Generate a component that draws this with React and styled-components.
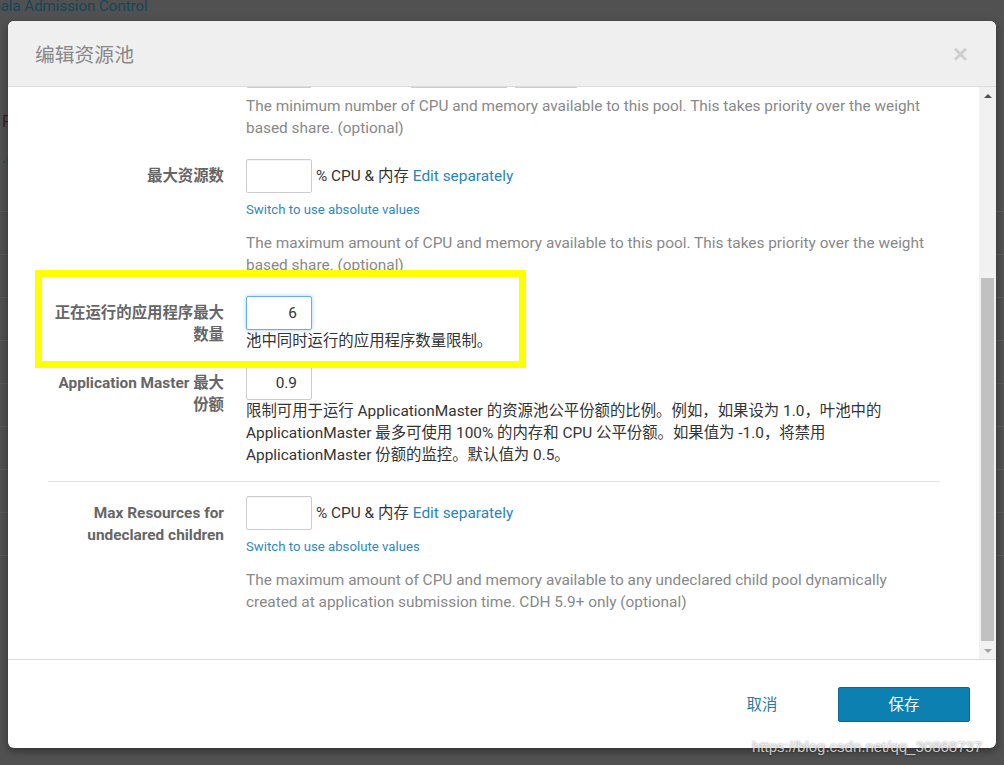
import React from 'react'
import styled, { createGlobalStyle } from 'styled-components'

const GlobalStyle = createGlobalStyle`
  html, body {
    margin: 0;
    padding: 0;
    background: #515151;
  }
  body {
    font-family: Roboto, "Noto Sans CJK SC", sans-serif;
    font-size: 15.4px;
  }
  * {
    box-sizing: border-box;
  }
`

export default () => {
  return (
    <Page>
      <GlobalStyle />
      <Backdrop>
        <PageTitle>Impala Admission Control</PageTitle>
        <PageLine $top={94} $color="#3e2020">F</PageLine>
        <PageLine $top={14} $color="#1d4c5c">.(</PageLine>
        {Array.from({ length: 9 }).map((_, i) => (
          <PageRow key={i} />
        ))}
      </Backdrop>

      <Modal>
        <Header>
          <Title>编辑资源池</Title>
          <Close>×</Close>
        </Header>

        <Body>
          <Content>
            <FormRow $top={-33}>
              <Label>最小资源数</Label>
              <Control>
                <InputLine>
                  <NumberInput readOnly value="" />
                  <Unit>虚拟内核</Unit>
                  <NumberInput readOnly value="" $width={98} $gap={32} />
                  <SelectBox>MiB</SelectBox>
                </InputLine>
                <Help $top={7}>
                  The minimum number of CPU and memory available to this pool. This takes priority over the weight
                  <br />
                  based share. (optional)
                </Help>
              </Control>
            </FormRow>

            <FormRow $top={20}>
              <Label>最大资源数</Label>
              <Control>
                <InputLine>
                  <NumberInput readOnly value="" />
                  <Unit>% CPU &amp; 内存</Unit>
                  <Link>Edit separately</Link>
                </InputLine>
                <SmallLink>Switch to use absolute values</SmallLink>
                <Help $top={13}>
                  The maximum amount of CPU and memory available to this pool. This takes priority over the weight
                  <br />
                  based share. (optional)
                </Help>
              </Control>
            </FormRow>

            <FormRow $top={20}>
              <Highlight />
              <Label>
                正在运行的应用程序最大
                <br />
                数量
              </Label>
              <Control>
                <InputLine>
                  <NumberInput readOnly value="6" $focused />
                </InputLine>
                <Note>池中同时运行的应用程序数量限制。</Note>
              </Control>
            </FormRow>

            <FormRow $top={14}>
              <Label>
                Application Master 最大
                <br />
                份额
              </Label>
              <Control>
                <InputLine>
                  <NumberInput readOnly value="0.9" />
                </InputLine>
                <Note>
                  限制可用于运行 ApplicationMaster 的资源池公平份额的比例。例如，如果设为 1.0，叶池中的
                  <br />
                  ApplicationMaster 最多可使用 100% 的内存和 CPU 公平份额。如果值为 -1.0，将禁用
                  <br />
                  ApplicationMaster 份额的监控。默认值为 0.5。
                </Note>
              </Control>
            </FormRow>

            <Divider />

            <FormRow $top={14}>
              <Label>
                Max Resources for
                <br />
                undeclared children
              </Label>
              <Control>
                <InputLine>
                  <NumberInput readOnly value="" />
                  <Unit>% CPU &amp; 内存</Unit>
                  <Link>Edit separately</Link>
                </InputLine>
                <SmallLink>Switch to use absolute values</SmallLink>
                <Help $top={13}>
                  The maximum amount of CPU and memory available to any undeclared child pool dynamically
                  <br />
                  created at application submission time. CDH 5.9+ only (optional)
                </Help>
              </Control>
            </FormRow>
          </Content>

          <Scrollbar>
            <Arrow>
              <ArrowUp />
            </Arrow>
            <ThumbTrack>
              <Thumb />
            </ThumbTrack>
            <Arrow>
              <ArrowDown />
            </Arrow>
          </Scrollbar>
        </Body>

        <Footer>
          <CancelButton>取消</CancelButton>
          <SaveButton>保存</SaveButton>
        </Footer>
      </Modal>

      <Watermark>https://blog.csdn.net/qq_30868737</Watermark>
    </Page>
  )
}

const Page = styled.div`
  position: relative;
  width: 1004px;
  height: 765px;
  overflow: hidden;
  background: #515151;
`

const Backdrop = styled.div`
  display: flex;
  flex-direction: column;
`

const PageTitle = styled.div`
  margin: -5px 0 0 -25px;
  font-size: 15px;
  line-height: 22px;
  color: #17455a;
`

const PageLine = styled.div`
  margin-top: ${p => p.$top}px;
  padding-left: 2px;
  font-size: 16px;
  line-height: 22px;
  color: ${p => p.$color};
`

const PageRow = styled.div`
  height: 43px;
  border-bottom: 1px solid #5b5b5b;
  &:first-of-type {
    margin-top: 20px;
  }
`

const Modal = styled.div`
  position: absolute;
  top: 21px;
  left: 8px;
  width: 988px;
  height: 727px;
  display: flex;
  flex-direction: column;
  background: #fff;
  border-radius: 6px;
  overflow: hidden;
  box-shadow: 0 3px 9px rgba(0, 0, 0, 0.4);
`

const Header = styled.div`
  display: flex;
  align-items: center;
  justify-content: space-between;
  height: 66px;
  flex-shrink: 0;
  padding: 0 28px 0 27px;
  background: #f0eff0;
  border-bottom: 1px solid #dcdcdc;
`

const Title = styled.h4`
  margin: 0;
  font-family: "Noto Sans CJK SC", Roboto, sans-serif;
  font-weight: 400;
  font-size: 19.8px;
  color: #888;
`

const Close = styled.span`
  font-family: "Liberation Sans", Arial, sans-serif;
  font-size: 26px;
  font-weight: 700;
  line-height: 1;
  color: #cfcfcf;
`

const Body = styled.div`
  flex: 1;
  display: flex;
  min-height: 0;
`

const Content = styled.div`
  flex: 1;
  overflow: hidden;
  padding: 0 39px 0 40px;
`

const FormRow = styled.div`
  position: relative;
  display: grid;
  grid-template-columns: 176px 1fr;
  column-gap: 22px;
  margin-top: ${p => p.$top}px;
`

const Label = styled.div`
  padding-top: 6px;
  text-align: right;
  font-weight: 700;
  font-size: 15.4px;
  line-height: 22px;
  color: #666;
  white-space: nowrap;
`

const Control = styled.div`
  display: flex;
  flex-direction: column;
  align-items: flex-start;
`

const InputLine = styled.div`
  display: flex;
  align-items: center;
  height: 34px;
`

const NumberInput = styled.input`
  width: ${p => p.$width || 66}px;
  height: 34px;
  margin-left: ${p => p.$gap || 0}px;
  padding: 0 14px 0 6px;
  border: 1px solid ${p => (p.$focused ? '#66afe9' : '#ccc')};
  border-radius: 2px;
  box-shadow: ${p => (p.$focused ? '0 0 4px rgba(102, 175, 233, 0.6)' : 'inset 0 1px 1px rgba(0, 0, 0, 0.04)')};
  font-family: Roboto, "Noto Sans CJK SC", sans-serif;
  font-size: 15.4px;
  color: #333;
  text-align: right;
  outline: none;
  background: #fff;
`

const SelectBox = styled.div`
  width: 64px;
  height: 34px;
  margin-left: 6px;
  padding: 0 8px;
  border: 1px solid #ccc;
  border-radius: 2px;
  line-height: 32px;
  color: #333;
`

const Unit = styled.span`
  margin-left: 4px;
  color: #333;
  line-height: 22px;
`

const Link = styled.a`
  margin-left: 4px;
  color: #2a84bb;
  line-height: 22px;
  cursor: pointer;
`

const SmallLink = styled.a`
  margin-top: 8px;
  font-size: 13.2px;
  line-height: 18px;
  color: #2f89c0;
  cursor: pointer;
`

const Help = styled.p`
  margin: ${p => p.$top}px 0 0;
  line-height: 22px;
  color: #888;
  white-space: nowrap;
`

const Note = styled.p`
  margin: 0;
  line-height: 22px;
  color: #333;
  white-space: nowrap;
`

const Highlight = styled.div`
  position: absolute;
  top: -26px;
  left: -13px;
  width: 491px;
  height: 98px;
  border: 7px solid #ffff00;
  pointer-events: none;
  z-index: 2;
`

const Divider = styled.hr`
  margin: 15px 0 0;
  border: 0;
  border-top: 1px solid #e2e2e2;
`

const Scrollbar = styled.div`
  width: 17px;
  flex-shrink: 0;
  display: flex;
  flex-direction: column;
  background: #f1f1f1;
`

const Arrow = styled.div`
  height: 17px;
  display: flex;
  align-items: center;
  justify-content: center;
`

const ArrowUp = styled.span`
  width: 0;
  height: 0;
  border-left: 4px solid transparent;
  border-right: 4px solid transparent;
  border-bottom: 4px solid #505050;
`

const ArrowDown = styled.span`
  width: 0;
  height: 0;
  border-left: 4px solid transparent;
  border-right: 4px solid transparent;
  border-top: 4px solid #a3a3a3;
`

const ThumbTrack = styled.div`
  flex: 1;
  display: flex;
  flex-direction: column;
  padding: 174px 2px 1px;
`

const Thumb = styled.div`
  flex: 1;
  background: #c1c1c1;
`

const Footer = styled.div`
  display: flex;
  align-items: center;
  justify-content: flex-end;
  gap: 10px;
  height: 89px;
  flex-shrink: 0;
  padding-right: 26px;
  border-top: 1px solid #dcdcdc;
`

const CancelButton = styled.button`
  width: 132px;
  height: 35px;
  padding: 0 0 3px;
  border: 0;
  background: transparent;
  font-family: "Noto Sans CJK SC", sans-serif;
  font-size: 15.4px;
  color: #2a7aa8;
  cursor: pointer;
`

const SaveButton = styled.button`
  width: 132px;
  height: 35px;
  padding: 0 0 3px;
  border: 1px solid #09679a;
  border-radius: 2px;
  background: #0c80b1;
  font-family: "Noto Sans CJK SC", sans-serif;
  font-size: 15.4px;
  color: #fff;
  cursor: pointer;
`

const Watermark = styled.div`
  position: absolute;
  top: 737px;
  left: 752px;
  font-family: "Liberation Sans", Arial, sans-serif;
  font-size: 15px;
  line-height: 20px;
  color: rgba(255, 255, 255, 0.75);
  text-shadow: 0 0 2px rgba(0, 0, 0, 0.5);
  white-space: nowrap;
`
